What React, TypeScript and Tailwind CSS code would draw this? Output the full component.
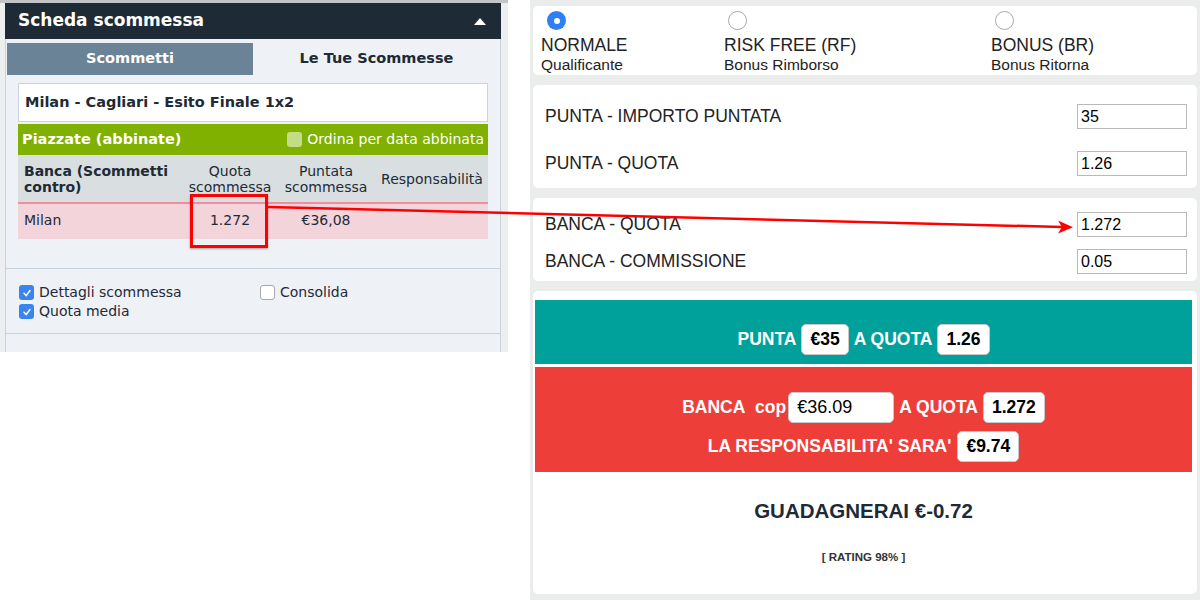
import React from 'react';

const leftFont = { fontFamily: '"DejaVu Sans", Verdana, sans-serif' };
const rightFont = { fontFamily: '"Liberation Sans", Arial, Helvetica, sans-serif' };

type Mode = { title: string; sub: string; checked?: boolean };

const modes: Mode[] = [
  { title: 'NORMALE', sub: 'Qualificante', checked: true },
  { title: 'RISK FREE (RF)', sub: 'Bonus Rimborso' },
  { title: 'BONUS (BR)', sub: 'Bonus Ritorna' },
];

const Radio: React.FC<{ checked?: boolean }> = ({ checked }) =>
  checked ? (
    <div className="w-[19px] h-[19px] rounded-full bg-[#2f7ff7] flex items-center justify-center ml-[6px]">
      <div className="w-[6px] h-[6px] rounded-full bg-white" />
    </div>
  ) : (
    <div className="w-[19px] h-[19px] rounded-full bg-white border border-[#a9a9a9] ml-[4px]" />
  );

const Field: React.FC<{ label: string; value: string }> = ({ label, value }) => (
  <div className="flex items-center justify-between h-[25px]">
    <span className="text-[17.5px] text-[#232323]">{label}</span>
    <div className="w-[110px] h-[25px] border border-[#b9b9b9] bg-white px-[3px] flex items-center text-[16px] text-black">
      {value}
    </div>
  </div>
);

const Pill: React.FC<{ children: React.ReactNode; className?: string }> = ({ children, className }) => (
  <span
    className={
      'inline-flex items-center justify-center h-[31px] px-[8px] bg-white rounded-[5px] border border-[#c9c9c9] text-black font-bold text-[17.5px] ' +
      (className || '')
    }
  >
    {children}
  </span>
);

const Check: React.FC<{ checked?: boolean }> = ({ checked }) =>
  checked ? (
    <span className="w-[15px] h-[15px] rounded-[3px] bg-[#3a84f0] flex items-center justify-center">
      <svg width="10" height="10" viewBox="0 0 10 10">
        <path d="M2 5.3 L4.2 7.5 L8 2.5" stroke="white" strokeWidth="1.5" fill="none" strokeLinecap="round" />
      </svg>
    </span>
  ) : (
    <span className="w-[15px] h-[15px] rounded-[3px] bg-white border border-[#a8a8a8]" />
  );

const App: React.FC = () => {
  return (
    <div className="relative w-[1200px] h-[600px] bg-white flex overflow-hidden">
      {/* left: betting slip */}
      <div className="w-[508px] h-[352px] overflow-hidden bg-[#eceef0] border-t-[3px] border-[#c2c5c8] pl-[5px] pr-[7px]" style={leftFont}>
        <div className="h-[36px] bg-[#1e2a36] flex items-center justify-between px-[13px]">
          <span className="text-white font-bold text-[17px]">Scheda scommessa</span>
          <svg width="12" height="7" viewBox="0 0 12 7" className="mr-[2px]">
            <polygon points="6,0 12,7 0,7" fill="white" />
          </svg>
        </div>
        <div className="bg-[#eef1f5] border-x border-[#c8d2dc] pt-[4px] h-[320px]">
          <div className="flex h-[32px] pl-[1px]">
            <div className="w-[246px] bg-[#6b8397] flex items-center justify-center text-white font-bold text-[14.5px]">
              Scommetti
            </div>
            <div className="flex-1 flex items-center justify-center text-[#1e2a36] font-bold text-[14.5px]">
              Le Tue Scommesse
            </div>
          </div>
          <div className="px-[12px] pt-[8px]">
            <div className="h-[39px] bg-white border border-[#c9d4de] flex items-center px-[6px] text-[#1e2a36] font-bold text-[14.5px]">
              Milan - Cagliari - Esito Finale 1x2
            </div>
            <div className="mt-[2px] h-[31px] bg-[#80b000] flex items-center justify-between px-[4px]">
              <span className="text-white font-bold text-[14.5px]">Piazzate (abbinate)</span>
              <span className="flex items-center gap-[5px] text-white text-[14px]">
                <span className="w-[15px] h-[15px] rounded-[3px] bg-[#c3dc86]" />
                Ordina per data abbinata
              </span>
            </div>
            <div className="h-[47px] bg-[#d9dfe0] grid grid-cols-[166px_92px_100px_1fr] text-[14px] text-[#1e2a36] leading-[16px]">
              <div className="pl-[6px] pt-[8px] font-bold">
                Banca (Scommetti
                <br />
                contro)
              </div>
              <div className="text-center pt-[8px]">
                Quota
                <br />
                scommessa
              </div>
              <div className="text-center pt-[8px]">
                Puntata
                <br />
                scommessa
              </div>
              <div className="text-center pt-[16px]">Responsabilità</div>
            </div>
            <div className="h-[37px] bg-[#f3d4db] border-t-2 border-[#f28da0] grid grid-cols-[166px_92px_100px_1fr] text-[14px] text-[#1e2a36] pt-[6px]">
              <div className="pl-[6px]">Milan</div>
              <div className="text-center">1.272</div>
              <div className="text-center">€36,08</div>
              <div />
            </div>
          </div>
          <div className="mt-[29px] border-t border-[#c9d3dd]" />
          <div className="px-[13px] pt-[14px] pb-[12px] text-[14px] text-[#1e2a36] leading-[19px]">
            <div className="flex">
              <label className="w-[241px] flex items-center gap-[5px]">
                <Check checked />
                Dettagli scommessa
              </label>
              <label className="flex items-center gap-[5px]">
                <Check />
                Consolida
              </label>
            </div>
            <label className="flex items-center gap-[5px]">
              <Check checked />
              Quota media
            </label>
          </div>
          <div className="border-t border-[#c9d3dd]" />
        </div>
      </div>

      <div className="w-[22px]" />

      {/* right: calculator */}
      <div className="flex-1 h-[600px] bg-[#ebeded] px-[3px] pt-[6px] flex flex-col gap-[10px]" style={rightFont}>
        <div className="h-[69px] bg-white rounded-[5px] grid grid-cols-[183px_267px_1fr] pl-[8px] pt-[5px]">
          {modes.map((m) => (
            <div key={m.title} className="flex flex-col">
              <Radio checked={m.checked} />
              <span className="text-[17.5px] text-[#222] leading-[20px] mt-[5px]">{m.title}</span>
              <span className="text-[15.5px] text-[#222] leading-[19px]">{m.sub}</span>
            </div>
          ))}
        </div>

        <div className="h-[103px] bg-white rounded-[5px] pl-[12px] pr-[10px] pt-[19px] flex flex-col gap-[22px]">
          <Field label="PUNTA - IMPORTO PUNTATA" value="35" />
          <Field label="PUNTA - QUOTA" value="1.26" />
        </div>

        <div className="h-[83px] bg-white rounded-[5px] pl-[12px] pr-[10px] pt-[14px] flex flex-col gap-[12px]">
          <Field label="BANCA - QUOTA" value="1.272" />
          <Field label="BANCA - COMMISSIONE" value="0.05" />
        </div>

        <div className="h-[303px] bg-white rounded-[5px] pt-[9px] pl-[2px] pr-[5px] flex flex-col">
          <div className="h-[64px] bg-[#00a19b] flex items-center justify-center gap-[5px] text-white font-bold text-[17.5px] pt-[14px]">
            PUNTA <Pill>€35</Pill> A QUOTA <Pill>1.26</Pill>
          </div>
          <div className="mt-[3px] h-[105px] bg-[#ee3e3a] flex flex-col items-center justify-center gap-[8px] text-white font-bold text-[17.5px] pt-[14px]">
            <div className="flex items-center gap-[5px]">
              <span>BANCA&nbsp; cop</span>
              <span className="inline-flex items-center h-[31px] w-[106px] px-[8px] bg-white rounded-[5px] border border-[#c9c9c9] text-black font-normal text-[18px] -ml-[3px]">
                €36.09
              </span>
              <span>A QUOTA</span>
              <Pill>1.272</Pill>
            </div>
            <div className="flex items-center gap-[6px]">
              <span>LA RESPONSABILITA' SARA'</span>
              <Pill>€9.74</Pill>
            </div>
          </div>
          <div className="flex-1 flex flex-col items-center">
            <div className="mt-[24px] text-[20.5px] font-bold text-[#1e2a36]">GUADAGNERAI €-0.72</div>
            <div className="mt-[22px] text-[11.5px] font-bold text-[#333]">[ RATING 98% ]</div>
          </div>
        </div>
      </div>

      {/* annotation overlay */}
      <div className="absolute left-[190px] top-[194px] w-[78px] h-[54px] border-[3px] border-[#ff0000] shadow-[0_1px_2px_rgba(0,0,0,0.35)]" />
      <svg className="absolute inset-0 pointer-events-none" width="1200" height="600">
        <line x1="268" y1="207" x2="1062" y2="227" stroke="#ff0000" strokeWidth="2.5" />
        <path d="M1073 227.2 L1058 220.5 L1062 227 L1058 233.5 Z" fill="#ff0000" />
      </svg>
    </div>
  );
};

export default App;
